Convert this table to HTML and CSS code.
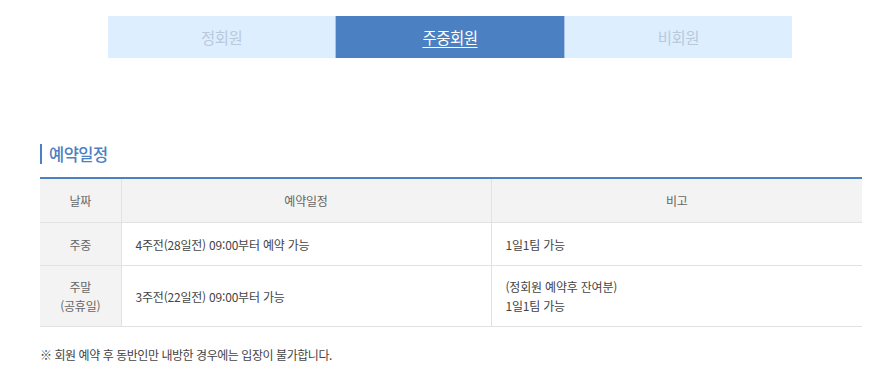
FILE: index.html
```html
<!DOCTYPE html>
<html lang="ko">
<head>
<meta charset="utf-8">
<link rel="stylesheet" href="styles.css">
</head>
<body>
<div class="page">
  <nav class="tabs">
    <a class="tab">정회원</a>
    <a class="tab active">주중회원</a>
    <a class="tab">비회원</a>
  </nav>
  <h3 class="title">예약일정</h3>
  <table class="sched">
    <colgroup>
      <col class="c1"><col class="c2"><col class="c3">
    </colgroup>
    <thead>
      <tr><th>날짜</th><th>예약일정</th><th>비고</th></tr>
    </thead>
    <tbody>
      <tr class="r1"><th>주중</th><td>4주전(28일전) 09:00부터 예약 가능</td><td>1일1팀 가능</td></tr>
      <tr class="r2"><th>주말<br>(공휴일)</th><td>3주전(22일전) 09:00부터 가능</td><td>(정회원 예약후 잔여분)<br>1일1팀 가능</td></tr>
    </tbody>
  </table>
  <p class="note">※ 회원 예약 후 동반인만 내방한 경우에는 입장이 불가합니다.</p>
</div>
</body>
</html>
```
FILE: styles.css
```css
html, body { margin: 0; padding: 0; background: #fff; }
body { font-family: "Noto Sans CJK KR", "Noto Sans", sans-serif; color: #555; }
.page { padding: 16px 21px 0 40px; }
.tabs { display: flex; margin-left: 68px; width: 684px; height: 42px; }
.tab { flex: 1; display: flex; align-items: center; justify-content: center; background: #ddeeff; color: #b9c9dc; font-size: 15.5px; letter-spacing: -0.5px; }
.tab.active { background: #4b80c2; color: #fff; text-decoration: underline; text-underline-offset: 3px; text-decoration-thickness: 1px; border-left: 1px solid #a9c5e6; border-right: 1px solid #a9c5e6; }
.title { margin: 86px 0 0 0; height: 20px; display: flex; align-items: center; border-left: 2px solid #4b80c2; padding-left: 7px; font-size: 16.5px; font-weight: 500; color: #4b80c2; line-height: 20px; letter-spacing: -0.5px; }
.sched { margin-top: 13px; width: 822px; border-collapse: collapse; border-top: 2px solid #4b80c2; font-size: 12px; table-layout: fixed; letter-spacing: -0.2px; }
.c1 { width: 81px; }
.c2 { width: 370px; }
.c3 { width: 371px; }
.sched th { font-weight: 400; color: #666; background: #f3f3f3; text-align: center; }
.sched thead th { height: 43px; padding: 0; border-bottom: 1px solid #e2e2e2; border-left: 1px solid #e2e2e2; }
.sched thead th:first-child { border-left: 0; }
.sched tbody th, .sched tbody td { border-bottom: 1px solid #e2e2e2; padding: 0 0 0 14px; line-height: 19px; }
.sched tbody th { padding: 0; }
.sched tbody td { border-left: 1px solid #e2e2e2; color: #444; }
.r1 th, .r1 td { height: 42px; }
.r2 th, .r2 td { height: 60px; }
.note { margin: 19px 0 0 0; font-size: 12px; color: #444; letter-spacing: -0.45px; }
```
